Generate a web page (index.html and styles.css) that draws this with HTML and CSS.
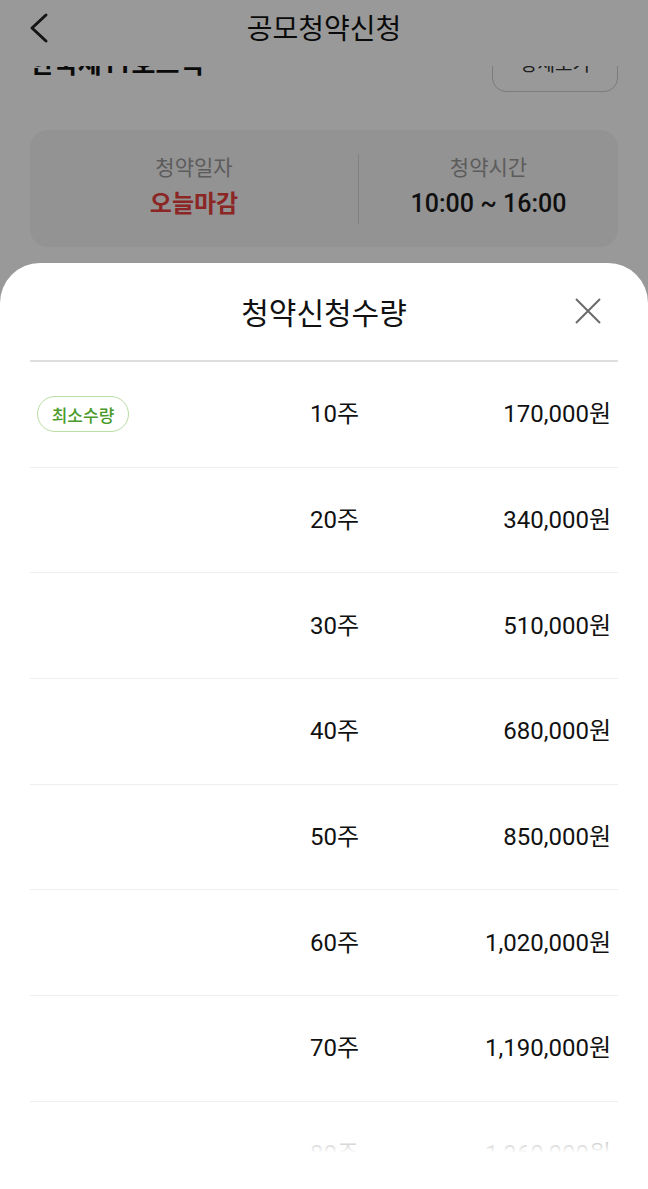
FILE: index.html
```html
<!DOCTYPE html>
<html lang="ko">
<head>
<meta charset="utf-8">
<link rel="stylesheet" href="styles.css">
</head>
<body>
<div class="page">
  <header class="topbar">
    <svg class="back" width="24" height="32" viewBox="0 0 24 32"><polyline points="17,3 3,16 17,29" fill="none" stroke="#222" stroke-width="3" stroke-linecap="round" stroke-linejoin="round"/></svg>
    <h1 class="topbar-title">공모청약신청</h1>
    <span class="topbar-spacer"></span>
  </header>
  <main class="scroll">
    <div class="scroll-inner">
      <div class="name-row">
        <span class="name">한국제11호스팩</span>
        <span class="detail-btn">상세보기</span>
      </div>
      <div class="info-card">
        <div class="info-col info-left">
          <span class="info-label">청약일자</span>
          <span class="info-value red">오늘마감</span>
        </div>
        <div class="info-col info-right">
          <span class="info-label">청약시간</span>
          <span class="info-value">10:00 ~ 16:00</span>
        </div>
      </div>
    </div>
  </main>
</div>
<div class="dim"></div>
<section class="sheet">
  <div class="sheet-head">
    <span></span>
    <h2 class="sheet-title">청약신청수량</h2>
    <svg class="close" width="26" height="26" viewBox="0 0 26 26"><path d="M1 1 L25 25 M25 1 L1 25" stroke="#6b6b6b" stroke-width="2" fill="none"/></svg>
  </div>
  <div class="sheet-divider"></div>
  <div class="list">
    <div class="row"><span class="badge">최소수량</span><span class="qty">10주</span><span class="price">170,000원</span></div>
    <div class="row"><span></span><span class="qty">20주</span><span class="price">340,000원</span></div>
    <div class="row"><span></span><span class="qty">30주</span><span class="price">510,000원</span></div>
    <div class="row"><span></span><span class="qty">40주</span><span class="price">680,000원</span></div>
    <div class="row"><span></span><span class="qty">50주</span><span class="price">850,000원</span></div>
    <div class="row"><span></span><span class="qty">60주</span><span class="price">1,020,000원</span></div>
    <div class="row"><span></span><span class="qty">70주</span><span class="price">1,190,000원</span></div>
    <div class="row"><span></span><span class="qty">80주</span><span class="price">1,360,000원</span></div>
    <div class="row"><span></span><span class="qty">90주</span><span class="price">1,530,000원</span></div>
  </div>
</section>
</body>
</html>
```

FILE: styles.css
```css
* { box-sizing: border-box; }
html, body {
  margin: 0;
  padding: 0;
  width: 648px;
  height: 1189px;
  overflow: hidden;
  background: #fff;
  font-family: Roboto, "Noto Sans CJK KR", sans-serif;
  color: #111;
}
.page {
  width: 648px;
  height: 1189px;
  display: flex;
  flex-direction: column;
}
.topbar {
  height: 66px;
  flex: none;
  display: grid;
  grid-template-columns: 80px 1fr 80px;
  align-items: center;
  background: #fff;
}
.back { margin-left: 29px; margin-top: -10px; }
.topbar-title {
  margin: -12px 0 0;
  text-align: center;
  font-size: 28px;
  font-weight: 400;
  color: #111;
}
.scroll {
  flex: 1;
  overflow: hidden;
}
.scroll-inner { margin-top: -30px; padding: 0 30px; }
.name-row {
  height: 56px;
  display: flex;
  align-items: center;
  justify-content: space-between;
}
.name {
  font-size: 26px;
  font-weight: 700;
  line-height: 56px;
}
.detail-btn {
  width: 126px;
  height: 56px;
  border: 1px solid #cfcfcf;
  border-radius: 14px;
  display: flex;
  align-items: center;
  justify-content: center;
  font-size: 19px;
  color: #333;
  line-height: 1;
}
.info-card {
  margin-top: 38px;
  height: 117px;
  border-radius: 18px;
  background: #f5f5f5;
  display: grid;
  grid-template-columns: 328px 1fr;
  align-items: center;
}
.info-col {
  display: flex;
  flex-direction: column;
  align-items: center;
  gap: 4px;
}
.info-right { border-left: 1px solid #d8d8d8; padding: 3px 0; }
.info-left { padding: 3px 0; }
.info-label { font-size: 21px; color: #9a9a9a; line-height: 30px; margin-top: -4px; }
.info-value { font-size: 25px; font-weight: 500; color: #1a1a1a; line-height: 34px; }
.info-value.red { color: #e8403f; font-weight: 700; font-size: 24px; }
.dim {
  position: absolute;
  inset: 0;
  background: rgba(0, 0, 0, 0.4);
}
.sheet {
  position: absolute;
  left: 0;
  right: 0;
  top: 263px;
  bottom: 0;
  background: #fff;
  border-radius: 40px 40px 0 0;
}
.sheet-head {
  height: 97px;
  display: grid;
  grid-template-columns: 1fr auto 1fr;
  align-items: center;
}
.sheet-title {
  margin: -2px 0 0;
  font-size: 30px;
  font-weight: 400;
  color: #111;
}
.close { justify-self: end; margin-right: 47px; margin-top: -2px; }
.sheet-divider {
  margin: 0 30px;
  height: 2px;
  background: #dedede;
}
.list {
  position: relative;
  margin: 0 30px;
  height: 791px;
  overflow: hidden;
}
.list::after {
  content: "";
  position: absolute;
  left: 0;
  right: 0;
  bottom: 0;
  height: 36px;
  background: linear-gradient(rgba(255,255,255,0.3), #fff);
}
.row {
  height: 105.67px;
  border-bottom: 1px solid #eeeeee;
  display: grid;
  grid-template-columns: 273px 1fr auto;
  align-items: center;
  padding: 0 7px;
  font-size: 24px;
}
.qty, .price { line-height: 1; color: #111; }
.badge {
  justify-self: start;
  width: 92px;
  height: 36px;
  border: 1px solid #b9dca0;
  border-radius: 18px;
  display: flex;
  align-items: center;
  justify-content: center;
  font-size: 17px;
  color: #4b9a2b;
  font-weight: 500;
}
```
